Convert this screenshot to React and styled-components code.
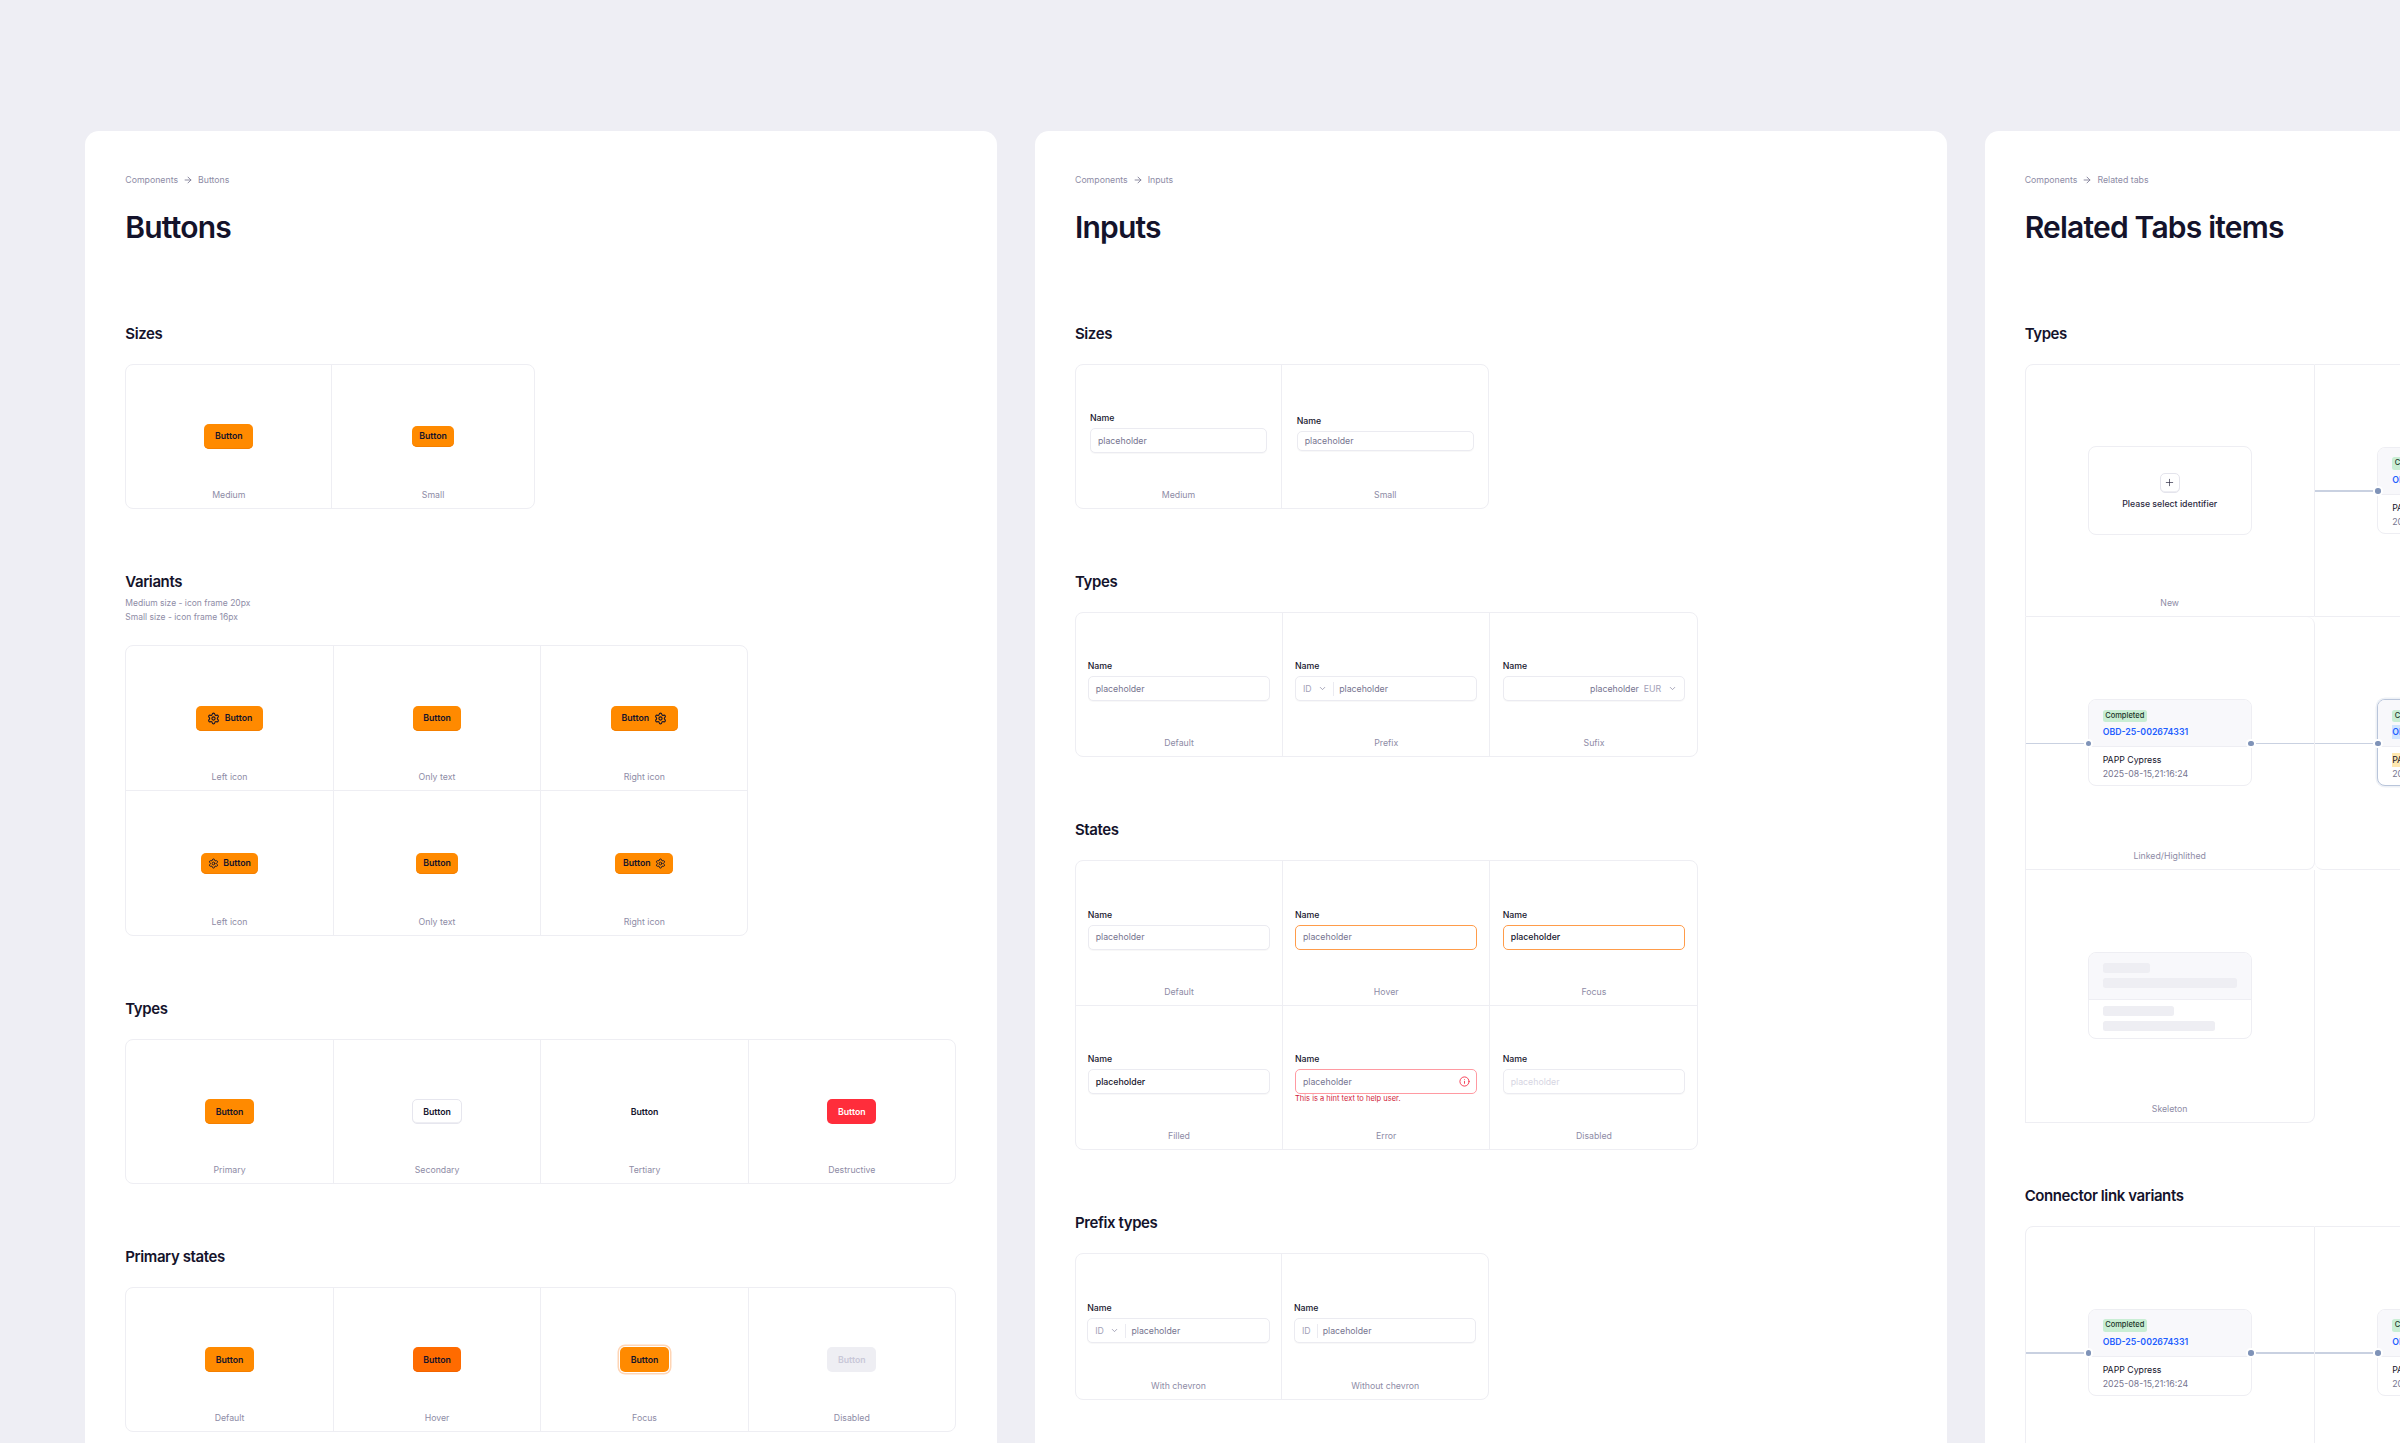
import React from "react";
import styled, { createGlobalStyle, css } from "styled-components";
import { ArrowRight, ChevronDown, Info, Plus, Settings } from "lucide-react";

const GlobalStyle = createGlobalStyle`
  html, body {
    margin: 0;
    height: 100%;
    overflow: hidden;
    background: #eeeef4;
  }
  * {
    box-sizing: border-box;
  }
`;

const line = "#eeeef3";
const ink = "#14132b";
const muted = "#8e8ca6";

const Page = styled.div`
  display: flex;
  align-items: flex-start;
  gap: 37.7px;
  height: 1443px;
  padding: 131px 0 0 85.3px;
  overflow: hidden;
  font-family: Inter, "Liberation Sans", sans-serif;
  color: ${ink};
`;

const Panel = styled.section`
  flex: 0 0 912px;
  min-height: 1400px;
  padding: 42px 40px 40px;
  background: #fff;
  border-radius: 14px;
`;

const Crumbs = styled.div`
  display: flex;
  align-items: center;
  gap: 5px;
  height: 14px;
  font-size: 8.75px;
  color: ${muted};
  svg {
    color: #76748f;
  }
`;

const Title = styled.h1`
  margin: 20px 0 76.5px;
  font-size: 30px;
  line-height: 40px;
  font-weight: 600;
  letter-spacing: -0.8px;
`;

const Sections = styled.div`
  display: flex;
  flex-direction: column;
  gap: 63px;
`;

const Heading = styled.h2`
  margin: 0 0 20px;
  font-size: 15px;
  line-height: 20px;
  font-weight: 600;
  letter-spacing: -0.4px;
`;

const Note = styled.p`
  margin: -16px 0 21.75px;
  font-size: 8.5px;
  line-height: 14px;
  color: ${muted};
`;

const Frame = styled.div`
  display: grid;
  grid-template-columns: ${(p) => p.$columns};
  width: fit-content;
  background: #fff;
  border: 1px solid ${line};
  border-radius: 8px;

  > div {
    height: 145px;
    border-right: 1px solid ${line};
    border-bottom: 1px solid ${line};
  }
  > div:nth-child(${(p) => p.$count}n) {
    border-right: 0;
  }
  > div:nth-last-child(-n + ${(p) => p.$count}) {
    height: ${(p) => p.$lastRow || "143px"};
    border-bottom: 0;
  }
`;

const Cell = styled.div`
  display: flex;
  flex-direction: column;
  height: ${(p) => p.$height || "auto"};
  padding: 20px 0 6px;
`;

const Stage = styled.div`
  flex: 1;
  display: flex;
  align-items: center;
  justify-content: center;
  min-width: 0;
`;

const Caption = styled.div`
  height: 14px;
  font-size: 8.75px;
  line-height: 14px;
  text-align: center;
  color: ${muted};
`;

const fills = {
  primary: css`
    background: #ff8a00;
    box-shadow: inset 0 -1px 0 #f47f00;
  `,
  hover: css`
    background: #ff6b00;
    box-shadow: inset 0 -1px 0 #f26400;
  `,
  focus: css`
    background: #ff8a00;
    box-shadow: 0 0 0 1px #fff, 0 0 0 2.5px #ffd5b5;
  `,
  secondary: css`
    background: #fff;
    border: 1px solid #e6e6ee;
    box-shadow: inset 0 -1px 0 #eeeef3;
  `,
  tertiary: css`
    background: transparent;
  `,
  destructive: css`
    background: #ff2d3b;
    color: #fff;
  `,
  disabled: css`
    background: #eeeef3;
    color: #c9c8d8;
  `,
};

const Button = styled.button`
  display: inline-flex;
  align-items: center;
  gap: ${(p) => (p.$small ? "4px" : "5px")};
  height: ${(p) => (p.$small ? "21px" : "25px")};
  padding: ${(p) => (p.$small ? "0 7.5px" : "0 10.5px")};
  border: 0;
  border-radius: 5px;
  font-family: inherit;
  font-size: 8.75px;
  font-weight: 600;
  color: ${ink};
  ${(p) => fills[p.$kind || "primary"]};
`;

const Gear = ({ small }) => <Settings size={small ? 11 : 13} strokeWidth={2} />;

const Field = styled.div`
  width: ${(p) => p.$width || "182.5px"};
`;

const Name = styled.div`
  margin-bottom: 3px;
  font-size: 8.75px;
  line-height: 14px;
  font-weight: 450;
`;

const boxTones = {
  plain: css`
    border: 1px solid #ebebf1;
    box-shadow: 0 1px 1px rgba(20, 19, 43, 0.03);
  `,
  active: css`
    border: 1px solid #ff9c4a;
  `,
  error: css`
    border: 1px solid #ff9aa2;
  `,
};

const Box = styled.div`
  display: flex;
  align-items: center;
  height: ${(p) => (p.$small ? "20px" : "25px")};
  padding: 0 7px;
  background: #fff;
  border-radius: 5px;
  font-size: 8.75px;
  ${(p) => boxTones[p.$tone || "plain"]};
`;

const valueTones = {
  placeholder: "#76748f",
  filled: ink,
  disabled: "#d6d5e2",
};

const Value = styled.span`
  flex: ${(p) => (p.$right ? "1" : "0 1 auto")};
  text-align: ${(p) => (p.$right ? "right" : "left")};
  color: ${(p) => valueTones[p.$tone || "placeholder"]};
  font-weight: ${(p) => (p.$tone === "filled" ? 450 : 400)};
`;

const Affix = styled.span`
  display: inline-flex;
  align-items: center;
  gap: ${(p) => p.$gap || "6.5px"};
  margin-left: ${(p) => p.$left || "0"};
  color: #a3a1b8;
  svg {
    color: #8e8ca6;
  }
`;

const Rule = styled.span`
  width: 1px;
  height: 14px;
  margin: 0 5px 0 ${(p) => p.$left || "6px"};
  background: #ebebf1;
`;

const Alert = styled(Info)`
  margin-left: auto;
  margin-right: -1px;
  color: #f5334b;
`;

const Foot = styled.div`
  height: 8px;
  font-size: 7.5px;
  line-height: 10px;
  white-space: nowrap;
  color: #d1243a;
`;

const Input = ({ width, small, tone, hint, children }) => (
  <Field $width={width}>
    <Name>Name</Name>
    <Box $small={small} $tone={tone}>
      {children}
    </Box>
    <Foot>{hint}</Foot>
  </Field>
);

const ItemRows = styled.div`
  display: grid;
  grid-template-columns: 290px 290px;
  width: fit-content;
`;

const ItemCell = styled(Cell)`
  border-right: 1px solid ${line};
  border-bottom: 1px solid ${line};
  ${(p) => p.$first && `border-left: 1px solid ${line};`}
  ${(p) => p.$top && `border-top: 1px solid ${line};`}
  border-radius: ${(p) => p.$radius || "0"};
`;

const Item = styled.div`
  position: relative;
  width: 164px;
  height: 87px;
  background: #fff;
  border: 1px solid ${line};
  border-radius: 8px;
  ${(p) =>
    p.$marked &&
    css`
      border: 1.5px solid #b9c5da;
      box-shadow: 0 0 0 1.5px #eef1f6;
    `}
`;

const ItemHead = styled.div`
  height: 47px;
  padding: 9.5px 14px 0;
  background: #f8f8fb;
  border-bottom: 1.5px solid ${line};
  border-radius: 7px 7px 0 0;
`;

const ItemBody = styled.div`
  padding: 6px 14px 0;
`;

const Badge = styled.div`
  width: fit-content;
  height: 12.5px;
  padding: 0 2.5px;
  background: #c9eed4;
  border-radius: 2.5px;
  font-size: 7.5px;
  line-height: 12.5px;
  font-weight: 500;
  color: #20352a;
`;

const Code = styled.div`
  width: fit-content;
  margin-top: 3px;
  font-size: 8.75px;
  line-height: 14px;
  font-weight: 600;
  color: #1f5fff;
  background: ${(p) => (p.$marked ? "#cfe4ff" : "transparent")};
`;

const Owner = styled.div`
  width: fit-content;
  font-size: 8.75px;
  line-height: 14px;
  font-weight: 400;
  background: ${(p) => (p.$marked ? "#ffe8b0" : "transparent")};
`;

const Stamp = styled.div`
  font-size: 8.75px;
  line-height: 15px;
  color: #76748f;
`;

const Link = styled.span`
  position: absolute;
  top: 42.5px;
  ${(p) => (p.$side === "left" ? "right: 100%;" : "left: 100%;")}
  width: 63px;
  height: 1.5px;
  background: #c9d1e1;
`;

const Dot = styled.span`
  position: absolute;
  top: 40.5px;
  ${(p) => (p.$side === "left" ? "left: -3px;" : "right: -3px;")}
  width: 5.5px;
  height: 5.5px;
  background: #7f93b8;
  border-radius: 50%;
  box-shadow: 0 0 0 2px #fff;
`;

const ItemCard = ({ left, right, marked }) => (
  <Item $marked={marked}>
    {left && <Link $side="left" />}
    {right && <Link $side="right" />}
    <ItemHead>
      <Badge>Completed</Badge>
      <Code $marked={marked}>OBD-25-002674331</Code>
    </ItemHead>
    <ItemBody>
      <Owner $marked={marked}>PAPP Cypress</Owner>
      <Stamp>2025-08-15,21:16:24</Stamp>
    </ItemBody>
    {left && <Dot $side="left" />}
    {right && <Dot $side="right" />}
  </Item>
);

const NewCard = styled.div`
  display: flex;
  flex-direction: column;
  align-items: center;
  width: 164px;
  height: 89px;
  padding-top: 26px;
  background: #fff;
  border: 1px solid ${line};
  border-radius: 8px;
  font-size: 8.75px;
  font-weight: 500;
  color: #2a2940;
`;

const PlusBox = styled.span`
  display: flex;
  align-items: center;
  justify-content: center;
  width: 20px;
  height: 20px;
  margin-bottom: 6px;
  border: 1px solid #e4e4ec;
  border-radius: 5px;
  box-shadow: inset 0 -1px 0 #eeeef3;
`;

const Bar = styled.div`
  width: ${(p) => p.$width};
  height: 10px;
  margin-bottom: 5px;
  background: #eeeef3;
  border-radius: 2.5px;
`;

const CellBlock = ({ caption, height, children }) => (
  <Cell $height={height}>
    <Stage>{children}</Stage>
    <Caption>{caption}</Caption>
  </Cell>
);

const Breadcrumb = ({ page }) => (
  <Crumbs>
    <span>Components</span>
    <ArrowRight size={10} strokeWidth={2} />
    <span>{page}</span>
  </Crumbs>
);

const four = "207.5px 207.5px 207.5px 206px";

const ButtonsPanel = () => (
  <Panel>
    <Breadcrumb page="Buttons" />
    <Title>Buttons</Title>
    <Sections>
      <div>
        <Heading>Sizes</Heading>
        <Frame $columns="206px 201.5px" $count={2}>
          <CellBlock caption="Medium">
            <Button>Button</Button>
          </CellBlock>
          <CellBlock caption="Small">
            <Button $small>Button</Button>
          </CellBlock>
        </Frame>
      </div>
      <div>
        <Heading>Variants</Heading>
        <Note>
          Medium size - icon frame 20px
          <br />
          Small size - icon frame 16px
        </Note>
        <Frame $columns="207.5px 207.5px 206px" $count={3} $lastRow="144px">
          <CellBlock caption="Left icon">
            <Button>
              <Gear />
              Button
            </Button>
          </CellBlock>
          <CellBlock caption="Only text">
            <Button>Button</Button>
          </CellBlock>
          <CellBlock caption="Right icon">
            <Button>
              Button
              <Gear />
            </Button>
          </CellBlock>
          <CellBlock caption="Left icon">
            <Button $small>
              <Gear small />
              Button
            </Button>
          </CellBlock>
          <CellBlock caption="Only text">
            <Button $small>Button</Button>
          </CellBlock>
          <CellBlock caption="Right icon">
            <Button $small>
              Button
              <Gear small />
            </Button>
          </CellBlock>
        </Frame>
      </div>
      <div>
        <Heading>Types</Heading>
        <Frame $columns={four} $count={4}>
          <CellBlock caption="Primary">
            <Button>Button</Button>
          </CellBlock>
          <CellBlock caption="Secondary">
            <Button $kind="secondary">Button</Button>
          </CellBlock>
          <CellBlock caption="Tertiary">
            <Button $kind="tertiary">Button</Button>
          </CellBlock>
          <CellBlock caption="Destructive">
            <Button $kind="destructive">Button</Button>
          </CellBlock>
        </Frame>
      </div>
      <div>
        <Heading>Primary states</Heading>
        <Frame $columns={four} $count={4}>
          <CellBlock caption="Default">
            <Button>Button</Button>
          </CellBlock>
          <CellBlock caption="Hover">
            <Button $kind="hover">Button</Button>
          </CellBlock>
          <CellBlock caption="Focus">
            <Button $kind="focus">Button</Button>
          </CellBlock>
          <CellBlock caption="Disabled">
            <Button $kind="disabled">Button</Button>
          </CellBlock>
        </Frame>
      </div>
    </Sections>
  </Panel>
);

const inputThree = "207px 207.5px 207px";

const InputsPanel = () => (
  <Panel>
    <Breadcrumb page="Inputs" />
    <Title>Inputs</Title>
    <Sections>
      <div>
        <Heading>Sizes</Heading>
        <Frame $columns="206px 206.5px" $count={2}>
          <CellBlock caption="Medium">
            <Input width="177px">
              <Value>placeholder</Value>
            </Input>
          </CellBlock>
          <CellBlock caption="Small">
            <Input width="177px" small>
              <Value>placeholder</Value>
            </Input>
          </CellBlock>
        </Frame>
      </div>
      <div>
        <Heading>Types</Heading>
        <Frame $columns={inputThree} $count={3}>
          <CellBlock caption="Default">
            <Input>
              <Value>placeholder</Value>
            </Input>
          </CellBlock>
          <CellBlock caption="Prefix">
            <Input>
              <Affix>
                ID
                <ChevronDown size={9} />
              </Affix>
              <Rule />
              <Value>placeholder</Value>
            </Input>
          </CellBlock>
          <CellBlock caption="Sufix">
            <Input>
              <Value $right>placeholder</Value>
              <Affix $left="5px" $gap="7px">
                EUR
                <ChevronDown size={9} />
              </Affix>
            </Input>
          </CellBlock>
        </Frame>
      </div>
      <div>
        <Heading>States</Heading>
        <Frame $columns={inputThree} $count={3} $lastRow="143.5px">
          <CellBlock caption="Default">
            <Input>
              <Value>placeholder</Value>
            </Input>
          </CellBlock>
          <CellBlock caption="Hover">
            <Input tone="active">
              <Value>placeholder</Value>
            </Input>
          </CellBlock>
          <CellBlock caption="Focus">
            <Input tone="active">
              <Value $tone="filled">placeholder</Value>
            </Input>
          </CellBlock>
          <CellBlock caption="Filled">
            <Input>
              <Value $tone="filled">placeholder</Value>
            </Input>
          </CellBlock>
          <CellBlock caption="Error">
            <Input tone="error" hint="This is a hint text to help user.">
              <Value>placeholder</Value>
              <Alert size={11} strokeWidth={2} />
            </Input>
          </CellBlock>
          <CellBlock caption="Disabled">
            <Input>
              <Value $tone="disabled">placeholder</Value>
            </Input>
          </CellBlock>
        </Frame>
      </div>
      <div>
        <Heading>Prefix types</Heading>
        <Frame $columns="206px 206.5px" $count={2} $lastRow="144.5px">
          <CellBlock caption="With chevron">
            <Input>
              <Affix>
                ID
                <ChevronDown size={9} />
              </Affix>
              <Rule />
              <Value>placeholder</Value>
            </Input>
          </CellBlock>
          <CellBlock caption="Without chevron">
            <Input>
              <Affix>ID</Affix>
              <Rule />
              <Value>placeholder</Value>
            </Input>
          </CellBlock>
        </Frame>
      </div>
    </Sections>
  </Panel>
);

const TabsPanel = () => (
  <Panel>
    <Breadcrumb page="Related tabs" />
    <Title>Related Tabs items</Title>
    <Sections>
      <div>
        <Heading>Types</Heading>
        <ItemRows>
          <ItemCell $height="253px" $first $top $radius="8px 0 0 0">
            <Stage>
              <NewCard>
                <PlusBox>
                  <Plus size={11} strokeWidth={1.5} />
                </PlusBox>
                Please select identifier
              </NewCard>
            </Stage>
            <Caption>New</Caption>
          </ItemCell>
          <ItemCell $height="253px" $top>
            <Stage>
              <ItemCard left />
            </Stage>
            <Caption />
          </ItemCell>
          <ItemCell $height="253px" $first $radius="0 8px 8px 0">
            <Stage>
              <ItemCard left right />
            </Stage>
            <Caption>Linked/Highlithed</Caption>
          </ItemCell>
          <ItemCell $height="253px" $radius="8px 0 0 8px">
            <Stage>
              <ItemCard left marked />
            </Stage>
            <Caption />
          </ItemCell>
          <ItemCell $height="253px" $first $radius="0 0 8px 0">
            <Stage>
              <Item>
                <ItemHead>
                  <Bar $width="47px" />
                  <Bar $width="134px" />
                </ItemHead>
                <ItemBody>
                  <Bar $width="71px" />
                  <Bar $width="112px" />
                </ItemBody>
              </Item>
            </Stage>
            <Caption>Skeleton</Caption>
          </ItemCell>
        </ItemRows>
      </div>
      <div>
        <Heading>Connector link variants</Heading>
        <ItemRows>
          <ItemCell $height="253px" $first $top $radius="8px 0 0 0">
            <Stage>
              <ItemCard left right />
            </Stage>
            <Caption />
          </ItemCell>
          <ItemCell $height="253px" $top>
            <Stage>
              <ItemCard left />
            </Stage>
            <Caption />
          </ItemCell>
        </ItemRows>
      </div>
    </Sections>
  </Panel>
);

export default function App() {
  return (
    <Page>
      <GlobalStyle />
      <ButtonsPanel />
      <InputsPanel />
      <TabsPanel />
    </Page>
  );
}
